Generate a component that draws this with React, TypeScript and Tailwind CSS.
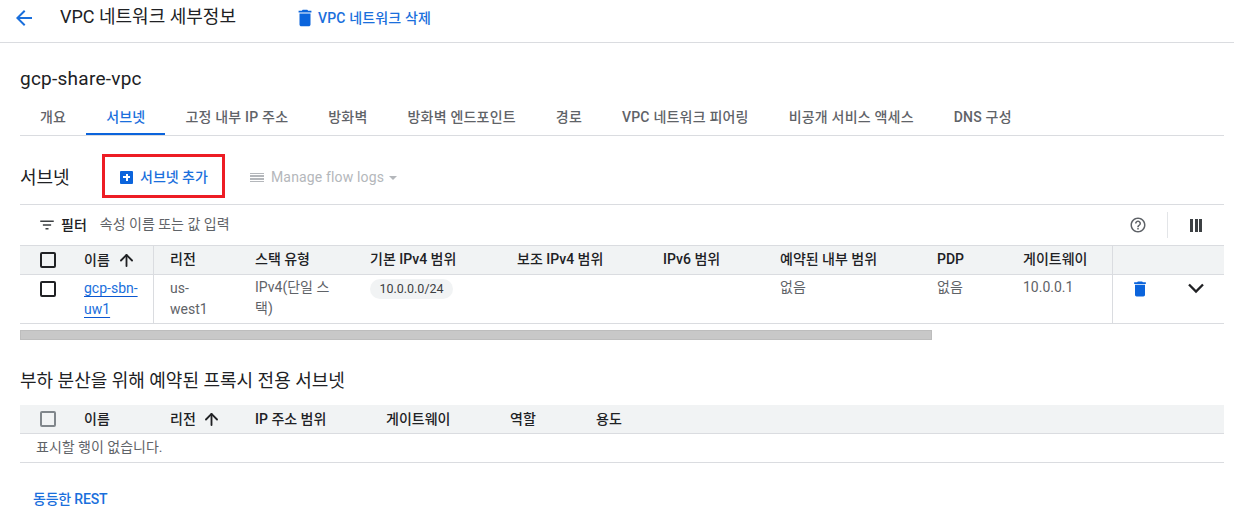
import { ArrowUp } from "lucide-react";

const font = "font-['Roboto','Noto_Sans_CJK_KR',sans-serif]";

const TrashIcon = ({ className }: { className: string }) => (
  <svg viewBox="0 0 24 24" className={className} fill="currentColor">
    <path d="M6 19c0 1.1.9 2 2 2h8c1.1 0 2-.9 2-2V7H6v12zM19 4h-3.5l-1-1h-5l-1 1H5v2h14V4z" />
  </svg>
);

const tabs = [
  "개요",
  "서브넷",
  "고정 내부 IP 주소",
  "방화벽",
  "방화벽 엔드포인트",
  "경로",
  "VPC 네트워크 피어링",
  "비공개 서비스 액세스",
  "DNS 구성",
];

const subnetCols = "grid grid-cols-[45px_89px_85px_115px_147px_146px_117px_157px_86px_105px_1fr]";
const proxyCols = "grid grid-cols-[45px_89px_85px_131px_124px_86px_1fr]";

const Checkbox = ({ gray }: { gray?: boolean }) => (
  <span
    className={`block h-4 w-4 rounded-[2px] border-2 ${gray ? "border-[#80868b]" : "border-[#202124]"}`}
  />
);

export default function App() {
  return (
    <div className={`${font} h-[520px] w-[1234px] overflow-hidden bg-white text-[#202124]`}>
      {/* Top bar */}
      <header className="flex h-[43px] items-start border-b border-[#dadce0] pt-[5px]">
        <svg viewBox="0 0 24 24" className="ml-[12px] mt-[1px] h-6 w-6 text-[#1a6fdc]" fill="currentColor">
          <path d="M20 11H7.83l5.59-5.59L12 4l-8 8 8 8 1.41-1.41L7.83 13H20v-2z" />
        </svg>
        <h1 className="ml-[24px] text-[18px] leading-6">VPC 네트워크 세부정보</h1>
        <button className="ml-[58px] mt-[1px] flex items-center text-[14px] font-medium leading-6 tracking-[0.15px] text-[#1a6fdc]">
          <TrashIcon className="h-[22px] w-[22px] text-[#0b64dc]" />
          <span className="ml-[2px]">VPC 네트워크 삭제</span>
        </button>
      </header>

      <main className="pl-5 pr-[10px]">
        <h2 className="mt-[24px] text-[19px] leading-6 tracking-[0.25px]">gcp-share-vpc</h2>

        {/* Tabs */}
        <nav className="mt-[14px] flex h-[31px] border-b border-[#dadce0]">
          {tabs.map((tab, i) => (
            <div
              key={tab}
              className={`h-[30px] whitespace-nowrap px-5 pt-[2px] text-[14px] font-medium leading-5 tracking-[0.2px] ${
                i === 1 ? "border-b-2 border-[#0b64dc] text-[#1a6fdc]" : "text-[#5f6368]"
              }`}
            >
              {tab}
            </div>
          ))}
        </nav>

        {/* Section header */}
        <div className="mt-[18px] flex h-[44px] items-center">
          <h3 className="w-[82px] pt-[2px] text-[18px]">서브넷</h3>
          <button className="flex h-[44px] w-[123px] items-center border-[3px] border-[#ed1c24] pl-[15px] pt-[2px] text-[14px] font-medium text-[#1a6fdc]">
            <span className="relative block h-[13px] w-[13px] rounded-[1px] bg-[#0b64dc]">
              <span className="absolute left-[3px] top-[5.5px] h-[2px] w-[7px] bg-white" />
              <span className="absolute left-[5.5px] top-[3px] h-[7px] w-[2px] bg-white" />
            </span>
            <span className="ml-[7px]">서브넷 추가</span>
          </button>
          <div className="ml-[25px] flex items-center pt-[3px] text-[#b4b7bb]">
            <span className="flex h-[10px] w-[14px] flex-col justify-between">
              <span className="block h-[1.5px] bg-[#b4b7bb]" />
              <span className="block h-[1.5px] bg-[#b4b7bb]" />
              <span className="block h-[1.5px] bg-[#b4b7bb]" />
              <span className="block h-[1.5px] bg-[#b4b7bb]" />
            </span>
            <span className="ml-[7px] text-[14px] tracking-[0.15px]">Manage flow logs</span>
            <span className="ml-[5px] h-0 w-0 border-x-[4.5px] border-t-[4.5px] border-x-transparent border-t-[#b4b7bb]" />
          </div>
        </div>

        {/* Filter bar */}
        <div className="mt-[6px] flex h-[41px] items-center border-t border-[#dadce0]">
          <svg viewBox="0 0 24 24" className="ml-[18px] h-[18px] w-[18px] text-[#3c4043]" fill="currentColor">
            <path d="M3 6h18v2H3zM6.5 11h11v2h-11zM10 16h4v2h-4z" />
          </svg>
          <span className="ml-[5px] text-[14px] font-medium">필터</span>
          <span className="ml-[13px] -translate-y-[1px] text-[14px] text-[#5f6368]">속성 이름 또는 값 입력</span>
          <svg viewBox="0 0 24 24" className="ml-auto h-[18px] w-[18px] text-[#5f6368]" fill="currentColor">
            <path d="M11 18h2v-2h-2v2zm1-16C6.48 2 2 6.48 2 12s4.48 10 10 10 10-4.48 10-10S17.52 2 12 2zm0 18c-4.41 0-8-3.59-8-8s3.59-8 8-8 8 3.59 8 8-3.59 8-8 8zm0-14c-2.21 0-4 1.79-4 4h2c0-1.1.9-2 2-2s2 .9 2 2c0 2-3 1.75-3 5h2c0-2.25 3-2.5 3-5 0-2.21-1.79-4-4-4z" />
          </svg>
          <span className="ml-[20px] h-[26px] w-px bg-[#e3e5e8]" />
          <span className="ml-[22px] mr-[22px] flex h-[13px] w-[12px] justify-between">
            <span className="w-[3px] bg-[#3c4043]" />
            <span className="w-[3px] bg-[#3c4043]" />
            <span className="w-[3px] bg-[#3c4043]" />
          </span>
        </div>

        {/* Subnet table */}
        <div className={`${subnetCols} h-[30px] border-y border-[#dadce0] bg-[#f1f3f4] text-[14px] font-medium leading-[27px]`}>
          <div className="flex items-center pl-5">
            <Checkbox />
          </div>
          <div className="flex items-center border-r border-[#dadce0] pl-[19px]">
            이름
            <ArrowUp size={19} strokeWidth={2.3} className="ml-[7px]" />
          </div>
          <div className="pl-4">리전</div>
          <div className="pl-4">스택 유형</div>
          <div className="pl-4">기본 IPv4 범위</div>
          <div className="pl-4">보조 IPv4 범위</div>
          <div className="pl-4">IPv6 범위</div>
          <div className="pl-4">예약된 내부 범위</div>
          <div className="pl-4">PDP</div>
          <div className="pl-4">게이트웨이</div>
          <div className="border-l border-[#dadce0]" />
        </div>
        <div className={`${subnetCols} h-[49px] border-b border-[#dadce0] text-[14px] leading-[21px] text-[#5f6368]`}>
          <div className="pl-5 pt-[6px]">
            <Checkbox />
          </div>
          <div className="border-r border-[#dadce0] pl-[19px] pr-3 pt-[3px]">
            <a className="text-[#1a6fdc] underline decoration-[#0b57d0] underline-offset-[3px]">gcp-sbn-uw1</a>
          </div>
          <div className="pl-4 pr-5 pt-[3px]">us-west1</div>
          <div className="break-all pl-4 pr-3 pt-[2px]">IPv4(단일 스택)</div>
          <div className="pl-4 pt-[4px]">
            <span className="block h-[20px] w-[83px] rounded-full bg-[#f1f3f4] text-center text-[12.5px] leading-5 text-[#3c4043]">
              10.0.0.0/24
            </span>
          </div>
          <div />
          <div />
          <div className="pl-4 pt-[2px]">없음</div>
          <div className="pl-4 pt-[2px]">없음</div>
          <div className="pl-4 pt-[2px]">10.0.0.1</div>
          <div className="flex items-start border-l border-[#dadce0] pl-[17px] pt-[4px]">
            <TrashIcon className="h-[20px] w-[20px] text-[#0b64dc]" />
            <svg viewBox="0 0 24 24" className="ml-[32px] h-7 w-7 -translate-y-[5px] text-[#202124]" fill="none" stroke="currentColor" strokeWidth="2">
              <path d="M6 9l6 6 6-6" />
            </svg>
          </div>
        </div>

        {/* Horizontal scrollbar */}
        <div className="mt-[6px] h-[10px] w-[912px] border border-[#bdbdbd] bg-[#c8c8c8]" />

        {/* Proxy subnets */}
        <h3 className="mt-[29px] text-[18px] leading-6">부하 분산을 위해 예약된 프록시 전용 서브넷</h3>
        <div className={`${proxyCols} mt-[12px] h-[29px] border-b border-[#dadce0] bg-[#f1f3f4] text-[14px] font-medium leading-[28px]`}>
          <div className="flex items-center pl-5">
            <Checkbox gray />
          </div>
          <div className="pl-[19px]">이름</div>
          <div className="flex items-center pl-4">
            리전
            <ArrowUp size={19} strokeWidth={2.3} className="ml-[6px]" />
          </div>
          <div className="pl-4">IP 주소 범위</div>
          <div className="pl-4">게이트웨이</div>
          <div className="pl-4">역할</div>
          <div className="pl-4">용도</div>
        </div>
        <div className="h-[29px] border-b border-[#dadce0] pl-4 text-[14px] leading-[26px] text-[#5f6368]">
          표시할 행이 없습니다.
        </div>

        <a className="ml-[13px] mt-[26px] block text-[14px] font-medium leading-5 tracking-[-0.2px] text-[#1a6fdc]">동등한 REST</a>
      </main>
    </div>
  );
}
